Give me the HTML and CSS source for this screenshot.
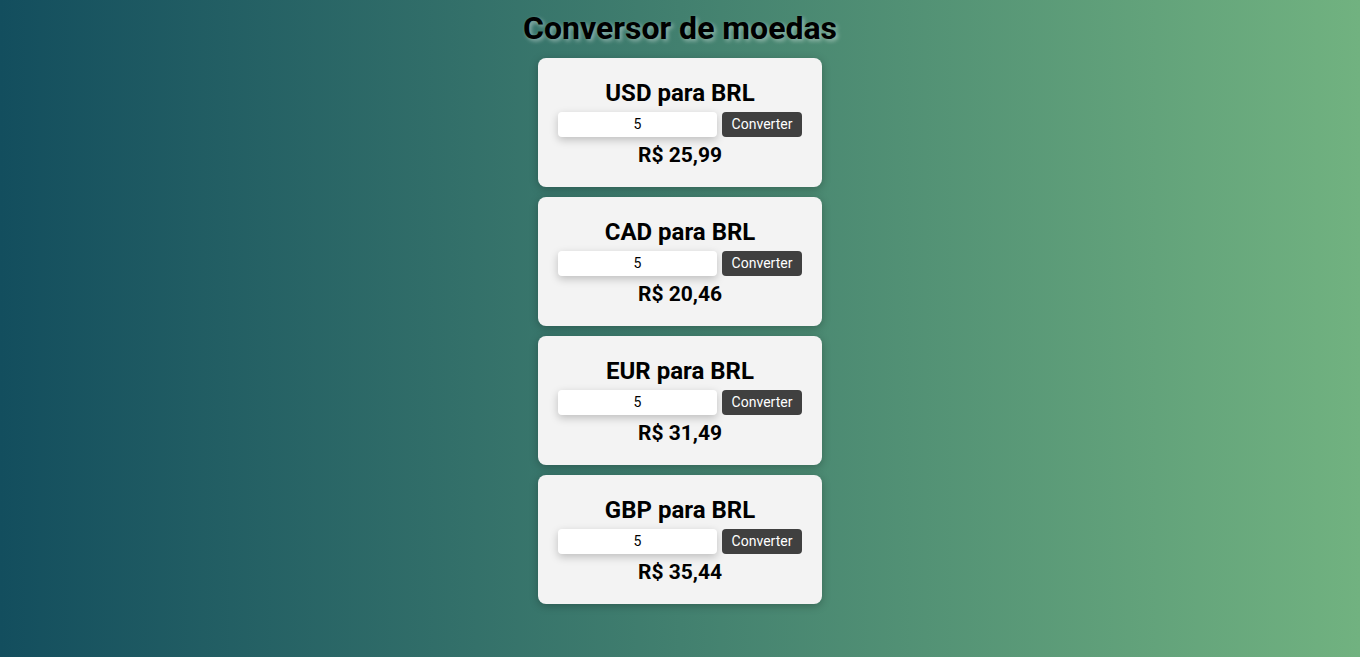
FILE: index.html
```html
<!DOCTYPE html>
<html lang="pt-BR">
<head>
<meta charset="utf-8">
<title>Conversor de moedas</title>
<link rel="stylesheet" href="styles.css">
</head>
<body>
<main class="page">
  <h1 class="title">Conversor de moedas</h1>
  <section class="card">
    <h2 class="card-title">USD para BRL</h2>
    <div class="row">
      <input class="amount" type="text" value="5">
      <button class="btn">Converter</button>
    </div>
    <p class="result">R$ 25,99</p>
  </section>
  <section class="card">
    <h2 class="card-title">CAD para BRL</h2>
    <div class="row">
      <input class="amount" type="text" value="5">
      <button class="btn">Converter</button>
    </div>
    <p class="result">R$ 20,46</p>
  </section>
  <section class="card">
    <h2 class="card-title">EUR para BRL</h2>
    <div class="row">
      <input class="amount" type="text" value="5">
      <button class="btn">Converter</button>
    </div>
    <p class="result">R$ 31,49</p>
  </section>
  <section class="card">
    <h2 class="card-title">GBP para BRL</h2>
    <div class="row">
      <input class="amount" type="text" value="5">
      <button class="btn">Converter</button>
    </div>
    <p class="result">R$ 35,44</p>
  </section>
</main>
</body>
</html>
```

FILE: styles.css
```css
* { box-sizing: border-box; }
html, body { margin: 0; padding: 0; }
body {
  min-height: 100vh;
  background: linear-gradient(to right, #134e5e, #71b280);
  font-family: Roboto, "Liberation Sans", Arial, sans-serif;
  color: #000;
}
.page {
  display: flex;
  flex-direction: column;
  align-items: center;
  gap: 10px;
  padding-top: 10px;
}
.title {
  margin: 0 0 1px;
  font-size: 32px;
  line-height: 37px;
  font-weight: 700;
  text-shadow: 2px 2px 4px rgba(255, 255, 255, 0.45);
}
.card {
  width: 284px;
  height: 129px;
  background: #f3f3f3;
  border-radius: 8px;
  box-shadow: 0 2px 8px rgba(0, 0, 0, 0.25);
  padding: 21px 20px 20px;
  display: flex;
  flex-direction: column;
  align-items: center;
}
.card-title {
  margin: 0 0 5px;
  font-size: 24px;
  line-height: 28px;
  font-weight: 700;
}
.row {
  display: flex;
  gap: 5px;
  width: 100%;
}
.amount {
  width: 159px;
  height: 25px;
  border: none;
  border-radius: 4px;
  background: #fff;
  box-shadow: 0 3px 8px rgba(0, 0, 0, 0.22);
  text-align: center;
  font-family: Roboto, "Liberation Sans", Arial, sans-serif;
  font-size: 14px;
  color: #000;
  padding: 0 0 2px;
  outline: none;
}
.btn {
  width: 80px;
  height: 25px;
  border: none;
  border-radius: 4px;
  background: #404040;
  color: #fff;
  font-family: Roboto, "Liberation Sans", Arial, sans-serif;
  font-size: 14px;
  padding: 0 0 2px;
  cursor: pointer;
}
.result {
  margin: 6px 0 0;
  font-size: 21px;
  line-height: 25px;
  font-weight: 700;
}
```
